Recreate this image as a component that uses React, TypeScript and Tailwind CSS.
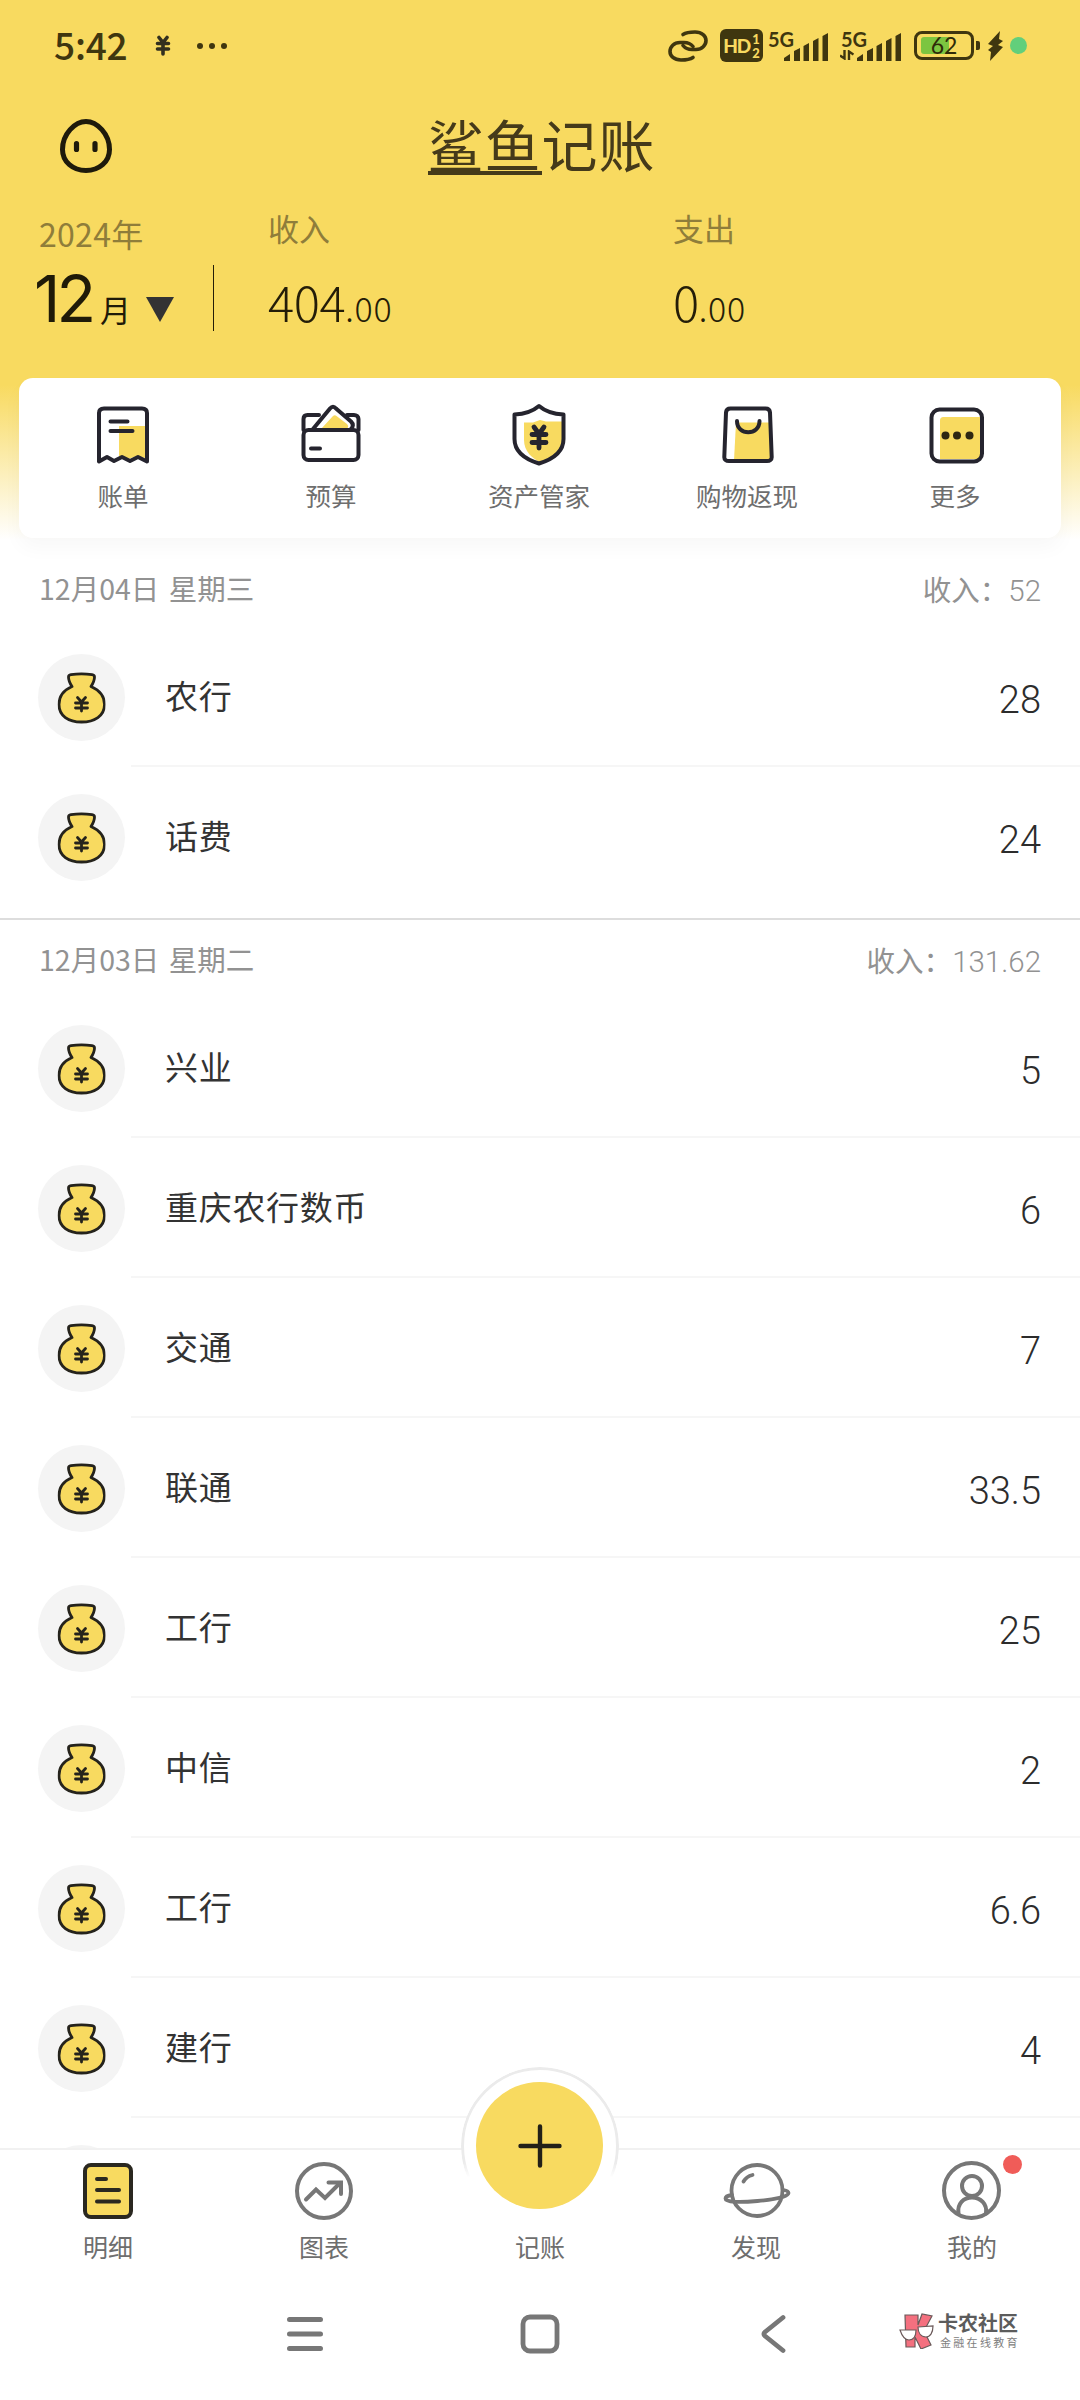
import React from 'react';
import clsx from 'clsx';

interface Entry {
  name: string;
  amount: string;
}

interface DayGroup {
  date: string;
  income: string;
  entries: Entry[];
}

const days: DayGroup[] = [
  {
    date: '12月04日 星期三',
    income: '52',
    entries: [
      { name: '农行', amount: '28' },
      { name: '话费', amount: '24' },
    ],
  },
  {
    date: '12月03日 星期二',
    income: '131.62',
    entries: [
      { name: '兴业', amount: '5' },
      { name: '重庆农行数币', amount: '6' },
      { name: '交通', amount: '7' },
      { name: '联通', amount: '33.5' },
      { name: '工行', amount: '25' },
      { name: '中信', amount: '2' },
      { name: '工行', amount: '6.6' },
      { name: '建行', amount: '4' },
      { name: '', amount: '' },
    ],
  },
];

const INK = '#25242e';
const YELLOW = '#f8da60';
const GRAY = '#777777';

const LinkIcon = () => (
  <svg width="40" height="32" viewBox="0 0 40 32" fill="none" stroke="#3f360f" strokeWidth="3.6" strokeLinecap="round">
    <path d="M15 4.5C18 2.5 21 2 27 2c7 0 11 4 11 8.500s-4 9-10 9h-4c-4 0-7-1.500-9-4" />
    <path d="M25 27.500c-3 2-6 2.500-12 2.500C6 30 2 26 2 21.500s4-9 10-9h4c4 0 7 1.500 9 4" />
  </svg>
);

const SignalBars = () => (
  <svg width="45" height="29" viewBox="0 0 45 29" fill="#3f360f">
    <path d="M0 29v-3l6-4v7zM10 29V19l6-3v13zM19.500 29V14l5.500-3v18zM29 29V9l5.500-3v23zM38.500 29V4l5.500-3v28z" />
  </svg>
);

const Bolt = () => (
  <svg width="17" height="30" viewBox="0 0 17 30" fill="#3f360f">
    <path d="M13 0L1 13l5 2-5 4 3 2-1 9 13-14-5-2 5-4-4-2z" />
  </svg>
);

const FaceIcon = () => (
  <svg width="52" height="54" viewBox="0 0 52 54" fill="none" stroke="#1e1a0b" strokeLinecap="round">
    <path d="M26 2.500C37 2.500 49.500 15 49.500 30.500 49.500 43 39 51.500 26 51.500S2.500 43 2.500 30.500C2.500 15 15 2.500 26 2.500z" strokeWidth="5" />
    <path d="M16.500 24.500v6M35 24.500v6" strokeWidth="5.2" />
  </svg>
);

const BillIcon = () => (
  <svg width="60" height="64" viewBox="0 0 60 64" fill="none" stroke={INK} strokeWidth="4" strokeLinecap="round" strokeLinejoin="round">
    <path d="M26 24h26v32l-8-2-9 3-9-3z" fill={YELLOW} stroke="none" />
    <path d="M6 59.500V11c0-3 2-4.500 5-4.500h38c3 0 5 1.500 5 4.500v48.500l-9-4.500-8 4-8-4-8 4-7-4z" />
    <path d="M17.500 19.500h17M17.500 29h22" />
  </svg>
);

const BudgetIcon = () => (
  <svg width="60" height="64" viewBox="0 0 60 64" fill="none" stroke={INK} strokeWidth="4" strokeLinecap="round" strokeLinejoin="round">
    <path d="M2.500 28V17c0-3 2-4 4-4H18M46 13h7c2.500 0 4.500 1.500 4.500 4v11" />
    <path d="M12 27L29 6.500c2-2.500 4-2.500 6 0L50 19.500c2.500 2.500 2.500 5 0 7.500" fill="#fff" />
    <path d="M20 27l12-13c1-1 2.500-1 3.500 0L46 22c1.500 1.500 1.500 3 0 5z" fill={YELLOW} stroke="none" />
    <rect x="2.500" y="28" width="55" height="30" rx="5" />
    <path d="M10 46.500h9" />
  </svg>
);

const ShieldIcon = () => (
  <svg width="60" height="64" viewBox="0 0 60 64" fill="none" stroke={INK} strokeWidth="4" strokeLinecap="round" strokeLinejoin="round">
    <path d="M15 20.500h9l7-2.500 6 1.500h17v17c0 13-11 21.500-21 24.500-10-4-18-12-18-23z" fill={YELLOW} stroke="none" />
    <path d="M30 4c7 6 14 8 24.500 8.500V37C54.500 50 43 57.500 30 61.500 17 57.500 5.500 50 5.500 37V12.500C16 12 23 10 30 4z" />
    <path d="M25 25l5 7 5-7M23 32.500h14M23 40.500h14M30 32v14" strokeWidth="4.800" />
  </svg>
);

const BagIcon = () => (
  <svg width="60" height="64" viewBox="0 0 60 64" fill="none" stroke={INK} strokeWidth="4" strokeLinecap="round" strokeLinejoin="round" className="translate-x-[1px]">
    <path d="M18 20.500h34l2 38H16z" fill={YELLOW} stroke="none" />
    <path d="M12.500 6.500h35c3 0 4.300 1.500 4.500 4l1.700 44.500c.1 2.500-1.700 4-4.700 4H11c-3 0-4.800-1.500-4.700-4L8 10.500c.2-2.500 1.500-4 4.500-4z" />
    <path d="M19 19c0 15 22.500 15 22.500 0" />
  </svg>
);

const MoreIcon = () => (
  <svg width="60" height="64" viewBox="0 0 60 64" className="translate-x-[2px] -translate-y-[2px]">
    <path d="M13 21c0-3 1-4 4-4h37v42H13z" fill={YELLOW} />
    <rect x="4.500" y="9.500" width="50.500" height="52" rx="8" fill="none" stroke={INK} strokeWidth="4" />
    <circle cx="18.500" cy="35.500" r="4" fill="#2e2712" />
    <circle cx="30" cy="35.500" r="4" fill="#2e2712" />
    <circle cx="42.500" cy="35.500" r="4" fill="#2e2712" />
  </svg>
);

const MoneyBag = () => (
  <svg width="48" height="52" viewBox="0 0 48 52" fill="none" stroke="#25231c" strokeWidth="2.800" strokeLinecap="round" strokeLinejoin="round" className="-translate-x-[0.500px] translate-y-[1px]">
    <path
      d="M14.500 14.500c-2-3-3.500-6.500-3.500-9.500 0-1.500 1-2 2.500-2.300 6-1 15-1 21 0 1.500.3 2.500.8 2.500 2.300 0 3-1.500 6.500-3.500 9.500C41.500 18 47 24.500 47 32.500 47 44 37 50 24 50S1.500 44 1.500 32.500C1.500 24.500 6.500 18 14.500 14.500z"
      fill={YELLOW}
    />
    <path d="M20 25.500l4 4.500 4-4.500M18 31h12M18 36h12M24 30v9" />
  </svg>
);

const ListIcon = () => (
  <svg width="60" height="60" viewBox="0 0 60 60" fill="none" stroke="#2a2820" strokeWidth="4" strokeLinecap="round">
    <rect x="7" y="4" width="46" height="52" rx="6" fill={YELLOW} />
    <path d="M19 18h9M19 29h22M19 40.500h22" />
  </svg>
);

const ChartIcon = () => (
  <svg width="60" height="60" viewBox="0 0 60 60" fill="none" stroke={GRAY} strokeWidth="4" strokeLinecap="round" strokeLinejoin="round">
    <circle cx="30" cy="30" r="27" />
    <path d="M12 38.500l10-10 9 8.500 15-15" strokeLinejoin="miter" />
    <path d="M34.500 21.500H47V33" strokeLinejoin="miter" />
  </svg>
);

const PlanetIcon = () => (
  <svg width="68" height="60" viewBox="0 0 68 60" fill="none" stroke={GRAY} strokeWidth="3.800" strokeLinecap="round" strokeLinejoin="round" className="translate-x-[1px]">
    <circle cx="34" cy="29.500" r="25.500" />
    <path d="M20.500 20.500c2-3.500 5-5.500 9-6.500" />
    <path d="M9 34c-4 .5-6.500 2-6.500 3.500 0 4 15 4 32 2.500s31-4.500 31-8c0-1.500-2-2.500-5-3" />
  </svg>
);

const UserIcon = () => (
  <svg width="60" height="60" viewBox="0 0 60 60" fill="none" stroke={GRAY} strokeWidth="4" strokeLinecap="round" className="-translate-x-[0.500px]">
    <circle cx="30" cy="29.500" r="27.500" />
    <circle cx="30.500" cy="25" r="10" />
    <path d="M17 52.500C15.500 43 22 36.500 30.500 36.500S46 43 44.500 52.500" />
  </svg>
);

const shortcuts = [
  { label: '账单', icon: <BillIcon /> },
  { label: '预算', icon: <BudgetIcon /> },
  { label: '资产管家', icon: <ShieldIcon /> },
  { label: '购物返现', icon: <BagIcon /> },
  { label: '更多', icon: <MoreIcon /> },
];

const tabs = [
  { label: '明细', icon: <ListIcon /> },
  { label: '图表', icon: <ChartIcon /> },
  { label: '记账', icon: null },
  { label: '发现', icon: <PlanetIcon /> },
  { label: '我的', icon: <UserIcon />, dot: true },
];

const StatusBar = () => (
  <div className="flex h-[92px] items-center pl-[54px] pr-[53px] text-[#3f360f]">
    <span className="-mt-[4px] w-[76px] text-[37px] font-medium leading-none tracking-[-0.200px]">5:42</span>
    <svg className="ml-[24px]" width="18" height="22" viewBox="0 0 18 22" fill="none" stroke="#33301f" strokeWidth="3.600" strokeLinecap="round">
      <path d="M5 2.500l4 5 4-5M3.500 8.500h11M3.500 14h11M9 8v11" />
    </svg>
    <div className="ml-[25px] flex gap-[6px]">
      <i className="size-[6px] rounded-full bg-[#3f360f]" />
      <i className="size-[6px] rounded-full bg-[#3f360f]" />
      <i className="size-[6px] rounded-full bg-[#3f360f]" />
    </div>
    <div className="-mt-[1px] ml-auto flex items-center">
      <LinkIcon />
      <div className="ml-[12px] flex h-[33px] w-[43px] items-center justify-center rounded-[6px] bg-[#3f360f] font-['Lato'] text-[#f8da60]">
        <span className="text-[19px] font-black leading-none tracking-[-1px]">HD</span>
        <span className="ml-[2px] flex flex-col text-[13px] font-black leading-[14px]">
          <span>1</span>
          <span>2</span>
        </span>
      </div>
      <div className="relative ml-[21px] h-[31px] w-[45px] pt-[2px]">
        <span className="absolute left-[-16px] top-[-1px] font-['Lato'] text-[20px] font-bold leading-none">5G</span>
        <SignalBars />
      </div>
      <div className="relative ml-[28px] h-[31px] w-[45px] pt-[2px]">
        <span className="absolute left-[-16px] top-[-1px] font-['Lato'] text-[20px] font-bold leading-none">5G</span>
        <svg className="absolute left-[-17px] top-[20px]" width="14" height="10" viewBox="0 0 14 10" fill="none" stroke="#3f360f" strokeWidth="2.400">
          <path d="M0 5.500l4.500 3V0M13.500 4.500L9 1.500V10" />
        </svg>
        <SignalBars />
      </div>
      <div className="relative ml-[12px] flex h-[29px] w-[60px] items-center justify-center rounded-[8px] border-[3px] border-[#3f360f]">
        <div className="absolute left-[4px] top-[3px] h-[17px] w-[28px] rounded-l-[3px] bg-[#7cc540]" />
        <span className="relative font-['Lato'] text-[23px] leading-none text-[#2f2a08]">62</span>
      </div>
      <div className="ml-[2px] h-[9px] w-[4px] rounded-r-[2px] bg-[#3f360f]" />
      <div className="ml-[7px]">
        <Bolt />
      </div>
      <div className="ml-[6px] size-[17px] rounded-full bg-[#62cf7b]" />
    </div>
  </div>
);

const Total = ({ label, whole, cents }: { label: string; whole: string; cents: string }) => (
  <div>
    <div className="text-[31px] leading-[40px] text-[#8f7d3a]">{label}</div>
    <div className="mt-[18px] text-[49px] font-light leading-[70px] tracking-[-0.500px] text-[#241d08]">
      {whole}
      <span className="text-[34px] tracking-[0.800px]">{cents}</span>
    </div>
  </div>
);

const EntryRow = ({ name, amount, last }: Entry & { last: boolean }) => (
  <div className="flex h-[140px] items-center pl-[39px]">
    <div className="-ml-px flex size-[87px] shrink-0 items-center justify-center rounded-full bg-[#f4f4f4]">
      <MoneyBag />
    </div>
    <div className={clsx('ml-[6px] flex h-full flex-1 items-center justify-between border-b-2 pl-[34px] pr-[39px]', last ? 'border-transparent' : 'border-[#f6f6f6]')}>
      <span className="text-[33px] tracking-[0.700px] text-[#333333]">{name}</span>
      <span className="mt-[8px] font-['Roboto'] text-[38px] font-light text-[#2c2c2c]">{amount}</span>
    </div>
  </div>
);

const Watermark = () => (
  <div className="absolute left-[899px] top-[33px] flex">
    <svg width="36" height="36" viewBox="0 0 36 36" stroke="#6b5a5a" strokeWidth="1.200">
      <path d="M6 2h13v10l4-11 10 2-8 15 7 14-10 4-6-12v10H7z" fill="#f4707f" />
      <path d="M1 17l16 0c0 7-3 10-7 10s-7-4-9-10zM19 14l15-1c0 7-3 11-7 11-5 0-8-4-8-10z" fill="#fff" />
    </svg>
    <div className="ml-[3px]">
      <div className="whitespace-nowrap text-[20px] font-bold leading-[20px] text-[#5c5c5c]">卡农社区</div>
      <div className="mt-[2px] whitespace-nowrap pl-[2px] text-[11px] leading-[14px] tracking-[2.300px] text-[#808080]">金融在线教育</div>
    </div>
  </div>
);

const App: React.FC = () => {
  return (
    <div className="relative flex h-[2400px] w-[1080px] flex-col overflow-hidden bg-white font-['Noto_Sans_CJK_SC',sans-serif]">
      <div className="h-[549px] shrink-0 bg-[linear-gradient(180deg,#f8da60_0px,#f8da60_385px,#ffffff_540px)]">
        <StatusBar />

        <div className="relative flex h-[108px] items-center justify-center">
          <div className="absolute left-[60px] top-[27px]">
            <FaceIcon />
          </div>
          <h1 className="-mt-[3px] ml-[3px] flex text-[56px] leading-none tracking-[1px] text-[#453a1a]">
            <span className="border-b-[4px] border-[#453a1a]">鲨鱼</span>
            <span>记账</span>
          </h1>
        </div>

        <div className="flex h-[178px]">
          <div className="w-[213px] pl-[39px] pt-[11px]">
            <div className="text-[32px] leading-[44px] tracking-[0.300px] text-[#8f7d3a]">2024年</div>
            <div className="mt-[5px] flex items-baseline text-[#1f1a08]">
              <span className="-ml-[5px] w-[61px] font-['Inter'] text-[65px] leading-[78px] tracking-[-4px]">12</span>
              <span className="ml-[5px] text-[31px]">月</span>
              <svg className="ml-[15px]" width="28" height="25" viewBox="0 0 28 25">
                <path d="M0 0h28L14 25z" fill="#333333" />
              </svg>
            </div>
          </div>
          <div className="mt-[65px] h-[66px] w-px bg-[#241d08]" />
          <div className="w-[406px] pl-[54px] pt-[8px]">
            <Total label="收入" whole="404" cents=".00" />
          </div>
          <div className="pl-[53px] pt-[8px]">
            <Total label="支出" whole="0" cents=".00" />
          </div>
        </div>

        <div className="mx-[19px] grid h-[160px] grid-cols-5 rounded-[14px] bg-white pr-[2px] shadow-[0_10px_20px_rgba(0,0,0,0.03)]">
          {shortcuts.map((s) => (
            <div key={s.label} className="flex flex-col items-center pt-[24px]">
              {s.icon}
              <span className="mt-[11px] text-[25.5px] leading-[36px] text-[#6e6e6e]">{s.label}</span>
            </div>
          ))}
        </div>
      </div>

      {days.map((day, i) => (
        <section key={day.date} className={clsx('shrink-0', i === 0 && 'h-[371px] border-b-2 border-[#dddddd]')}>
          <div className="flex h-[78px] items-center justify-between pl-[39px] pr-[39px] text-[28.5px] text-[#929292]">
            <span className="mt-[1px] [word-spacing:3px]">{day.date}</span>
            <span className="mt-[5px]">
              收入：<span className="font-['Roboto'] text-[29.5px] font-light">{day.income}</span>
            </span>
          </div>
          {day.entries.map((entry, j) => (
            <EntryRow key={j} {...entry} last={j === day.entries.length - 1} />
          ))}
        </section>
      ))}

      {/* bottom tab bar + system navigation */}
      <div className="absolute bottom-0 left-0 h-[252px] w-full border-t-2 border-[#f1f1f1] bg-white">
        <div className="absolute left-[461px] top-[-83px] size-[158px] rounded-full border-[3px] border-[#ebebeb] bg-white [mask-image:linear-gradient(180deg,#000_60%,transparent_70%)]" />
        <div className="absolute left-[476px] top-[-68px] flex size-[127px] items-center justify-center rounded-full bg-[#f8da60]">
          <svg width="44" height="44" viewBox="0 0 44 44" stroke="#222018" strokeWidth="4.400" strokeLinecap="round">
            <path d="M22 2.500v39M2.500 22h39" />
          </svg>
        </div>
        <div className="grid grid-cols-5 pt-[11px]">
          {tabs.map((tab) => (
            <div key={tab.label} className="relative flex flex-col items-center">
              <div className="h-[60px]">{tab.icon}</div>
              {tab.dot && <i className="absolute left-[139px] top-[-6px] size-[19px] rounded-full bg-[#f05c58]" />}
              <span className="mt-[7px] text-[25px] leading-[36px] text-[#6e6e6e]">{tab.label}</span>
            </div>
          ))}
        </div>
        <div className="absolute left-0 top-[130px] h-[120px] w-full">
          <div className="flex pl-[285px] pt-[33px]">
            <svg width="40" height="42" viewBox="0 0 40 42" fill="none" stroke={GRAY} strokeWidth="5" strokeLinecap="round">
              <path d="M4.500 6.500h31M4.500 21h31M4.500 35.500h31" />
            </svg>
            <svg className="ml-[194px]" width="42" height="42" viewBox="0 0 42 42" fill="none" stroke={GRAY} strokeWidth="4.800">
              <rect x="4" y="4" width="34" height="34" rx="7" />
            </svg>
            <svg className="ml-[198px]" width="28" height="42" viewBox="0 0 28 42" fill="none" stroke={GRAY} strokeWidth="4.800" strokeLinecap="round" strokeLinejoin="round">
              <path d="M24 4.500L6 19c-1.500 1.300-1.500 2.700 0 4l18 14.500" />
            </svg>
          </div>
          <Watermark />
        </div>
      </div>
    </div>
  );
};

export default App;
